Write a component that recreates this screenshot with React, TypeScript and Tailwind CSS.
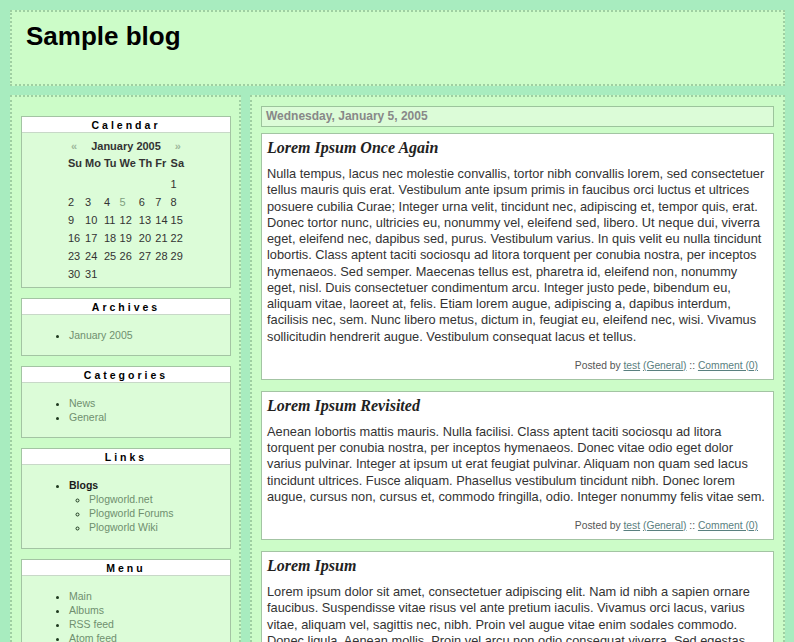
import React from "react";

const posts = [
  {
    title: "Lorem Ipsum Once Again",
    body: "Nulla tempus, lacus nec molestie convallis, tortor nibh convallis lorem, sed consectetuer tellus mauris quis erat. Vestibulum ante ipsum primis in faucibus orci luctus et ultrices posuere cubilia Curae; Integer urna velit, tincidunt nec, adipiscing et, tempor quis, erat. Donec tortor nunc, ultricies eu, nonummy vel, eleifend sed, libero. Ut neque dui, viverra eget, eleifend nec, dapibus sed, purus. Vestibulum varius. In quis velit eu nulla tincidunt lobortis. Class aptent taciti sociosqu ad litora torquent per conubia nostra, per inceptos hymenaeos. Sed semper. Maecenas tellus est, pharetra id, eleifend non, nonummy eget, nisl. Duis consectetuer condimentum arcu. Integer justo pede, bibendum eu, aliquam vitae, laoreet at, felis. Etiam lorem augue, adipiscing a, dapibus interdum, facilisis nec, sem. Nunc libero metus, dictum in, feugiat eu, eleifend nec, wisi. Vivamus sollicitudin hendrerit augue. Vestibulum consequat lacus et tellus.",
  },
  {
    title: "Lorem Ipsum Revisited",
    body: "Aenean lobortis mattis mauris. Nulla facilisi. Class aptent taciti sociosqu ad litora torquent per conubia nostra, per inceptos hymenaeos. Donec vitae odio eget dolor varius pulvinar. Integer at ipsum ut erat feugiat pulvinar. Aliquam non quam sed lacus tincidunt ultrices. Fusce aliquam. Phasellus vestibulum tincidunt nibh. Donec lorem augue, cursus non, cursus et, commodo fringilla, odio. Integer nonummy felis vitae sem.",
  },
  {
    title: "Lorem Ipsum",
    body: "Lorem ipsum dolor sit amet, consectetuer adipiscing elit. Nam id nibh a sapien ornare faucibus. Suspendisse vitae risus vel ante pretium iaculis. Vivamus orci lacus, varius vitae, aliquam vel, sagittis nec, nibh. Proin vel augue vitae enim sodales commodo. Donec ligula. Aenean mollis. Proin vel arcu non odio consequat viverra. Sed egestas aliquet nunc. Fusce aliquam. Phasellus vestibulum tincidunt nibh.",
  },
];

const weeks = [
  ["", "", "", "", "", "", "1"],
  ["2", "3", "4", "5", "6", "7", "8"],
  ["9", "10", "11", "12", "13", "14", "15"],
  ["16", "17", "18", "19", "20", "21", "22"],
  ["23", "24", "25", "26", "27", "28", "29"],
  ["30", "31", "", "", "", "", ""],
];

const Box = ({ title, children }: { title: string; children: React.ReactNode }) => (
  <div className="mb-[10px] border border-[#a3c4a3] bg-[#dcfcd8]">
    <div className="h-[16px] border-b border-[#c8d8c8] bg-white text-center text-[10.5px] font-bold leading-[16px] tracking-[3px] text-black">
      {title}
    </div>
    {children}
  </div>
);

const Link = ({ children }: { children: React.ReactNode }) => (
  <li className="text-[#6f8f6f]">{children}</li>
);

const App = () => {
  return (
    <div className="h-[642px] overflow-hidden bg-[#a8ecbf] pt-[10px] pr-[9px] pl-[10px] font-['Liberation_Sans',Arial,sans-serif]">
      <div className="h-[76px] border-2 border-dotted border-[#9fcfa2] bg-[#ccfcc8] pt-[8px] pl-[14px]">
        <h1 className="text-[26px] font-bold leading-[32px] text-black">Sample blog</h1>
      </div>

      <div className="mt-[9px] flex gap-[9px]">
        <aside className="w-[231px] shrink-0 border-2 border-dotted border-[#9fcfa2] bg-[#ccfcc8] pt-[19px] pr-[8px] pl-[9px] pb-10">
          <Box title="Calendar">
            <div className="flex justify-center pt-[4px] pb-[4px]">
              <table className="border-separate border-spacing-x-[3px] border-spacing-y-0 text-[11px] text-[#333]">
                <thead>
                  <tr>
                    <td colSpan={7} className="h-[18px] text-center font-bold">
                      <span className="mr-[14px] text-[#9cb89c]">«</span>
                      January 2005
                      <span className="ml-[14px] text-[#9cb89c]">»</span>
                    </td>
                  </tr>
                  <tr className="font-bold">
                    {["Su", "Mo", "Tu", "We", "Th", "Fr", "Sa"].map((d) => (
                      <td key={d} className="h-[20px] align-top">
                        {d}
                      </td>
                    ))}
                  </tr>
                </thead>
                <tbody>
                  {weeks.map((w, i) => (
                    <tr key={i}>
                      {w.map((d, j) => (
                        <td key={j} className={`h-[18px] ${d === "5" ? "text-[#7f9f7f]" : ""}`}>
                          {d}
                        </td>
                      ))}
                    </tr>
                  ))}
                </tbody>
              </table>
            </div>
          </Box>

          <Box title="Archives">
            <ul className="my-[13px] list-disc pl-[47px] text-[10.5px] leading-[14px] marker:text-[#1f3a1f]">
              <Link>January 2005</Link>
            </ul>
          </Box>

          <Box title="Categories">
            <ul className="my-[13px] list-disc pl-[47px] text-[10.5px] leading-[14px] marker:text-[#1f3a1f]">
              <Link>News</Link>
              <Link>General</Link>
            </ul>
          </Box>

          <Box title="Links">
            <ul className="mt-[13px] mb-[14px] list-disc pl-[47px] text-[10.5px] leading-[14px] marker:text-[#1f3a1f]">
              <li className="font-bold text-[#1a1a1a]">
                Blogs
                <ul className="list-[circle] pl-[20px] font-normal">
                  <Link>Plogworld.net</Link>
                  <Link>Plogworld Forums</Link>
                  <Link>Plogworld Wiki</Link>
                </ul>
              </li>
            </ul>
          </Box>

          <Box title="Menu">
            <ul className="my-[13px] list-disc pl-[47px] text-[10.5px] leading-[14px] marker:text-[#1f3a1f]">
              <Link>Main</Link>
              <Link>Albums</Link>
              <Link>RSS feed</Link>
              <Link>Atom feed</Link>
            </ul>
          </Box>
        </aside>

        <main className="min-w-0 flex-1 border-2 border-dotted border-[#9fcfa2] bg-[#ccfcc8] px-[9px] pt-[9px] pb-10">
          <div className="h-[21px] border border-[#9cc49c] bg-[#dcfcd8] pl-[4px] text-[12px] font-bold leading-[19px] text-[#888]">
            Wednesday, January 5, 2005
          </div>

          {posts.map((p, i) => (
            <div
              key={i}
              className={`${i === 0 ? "mt-[6px]" : "mt-[11px]"} border border-[#a3c4a3] bg-white px-[5px] pt-[4px] pb-[6px]`}
            >
              <h2 className="font-['Liberation_Serif','Times_New_Roman',serif] text-[16px] font-bold italic leading-[20px] text-[#222]">
                {p.title}
              </h2>
              <p className="mt-[8px] text-[12.8px] leading-[16.25px] text-[#333]">{p.body}</p>
              <div className="mt-[14px] pr-[10px] text-right text-[10.3px] leading-[14px] text-[#555]">
                Posted by <span className="text-[#5a8080] underline">test</span>{" "}
                <span className="text-[#5a8080] underline">(General)</span> ::{" "}
                <span className="text-[#5a8080] underline">Comment (0)</span>
              </div>
            </div>
          ))}
        </main>
      </div>
    </div>
  );
};

export default App;
